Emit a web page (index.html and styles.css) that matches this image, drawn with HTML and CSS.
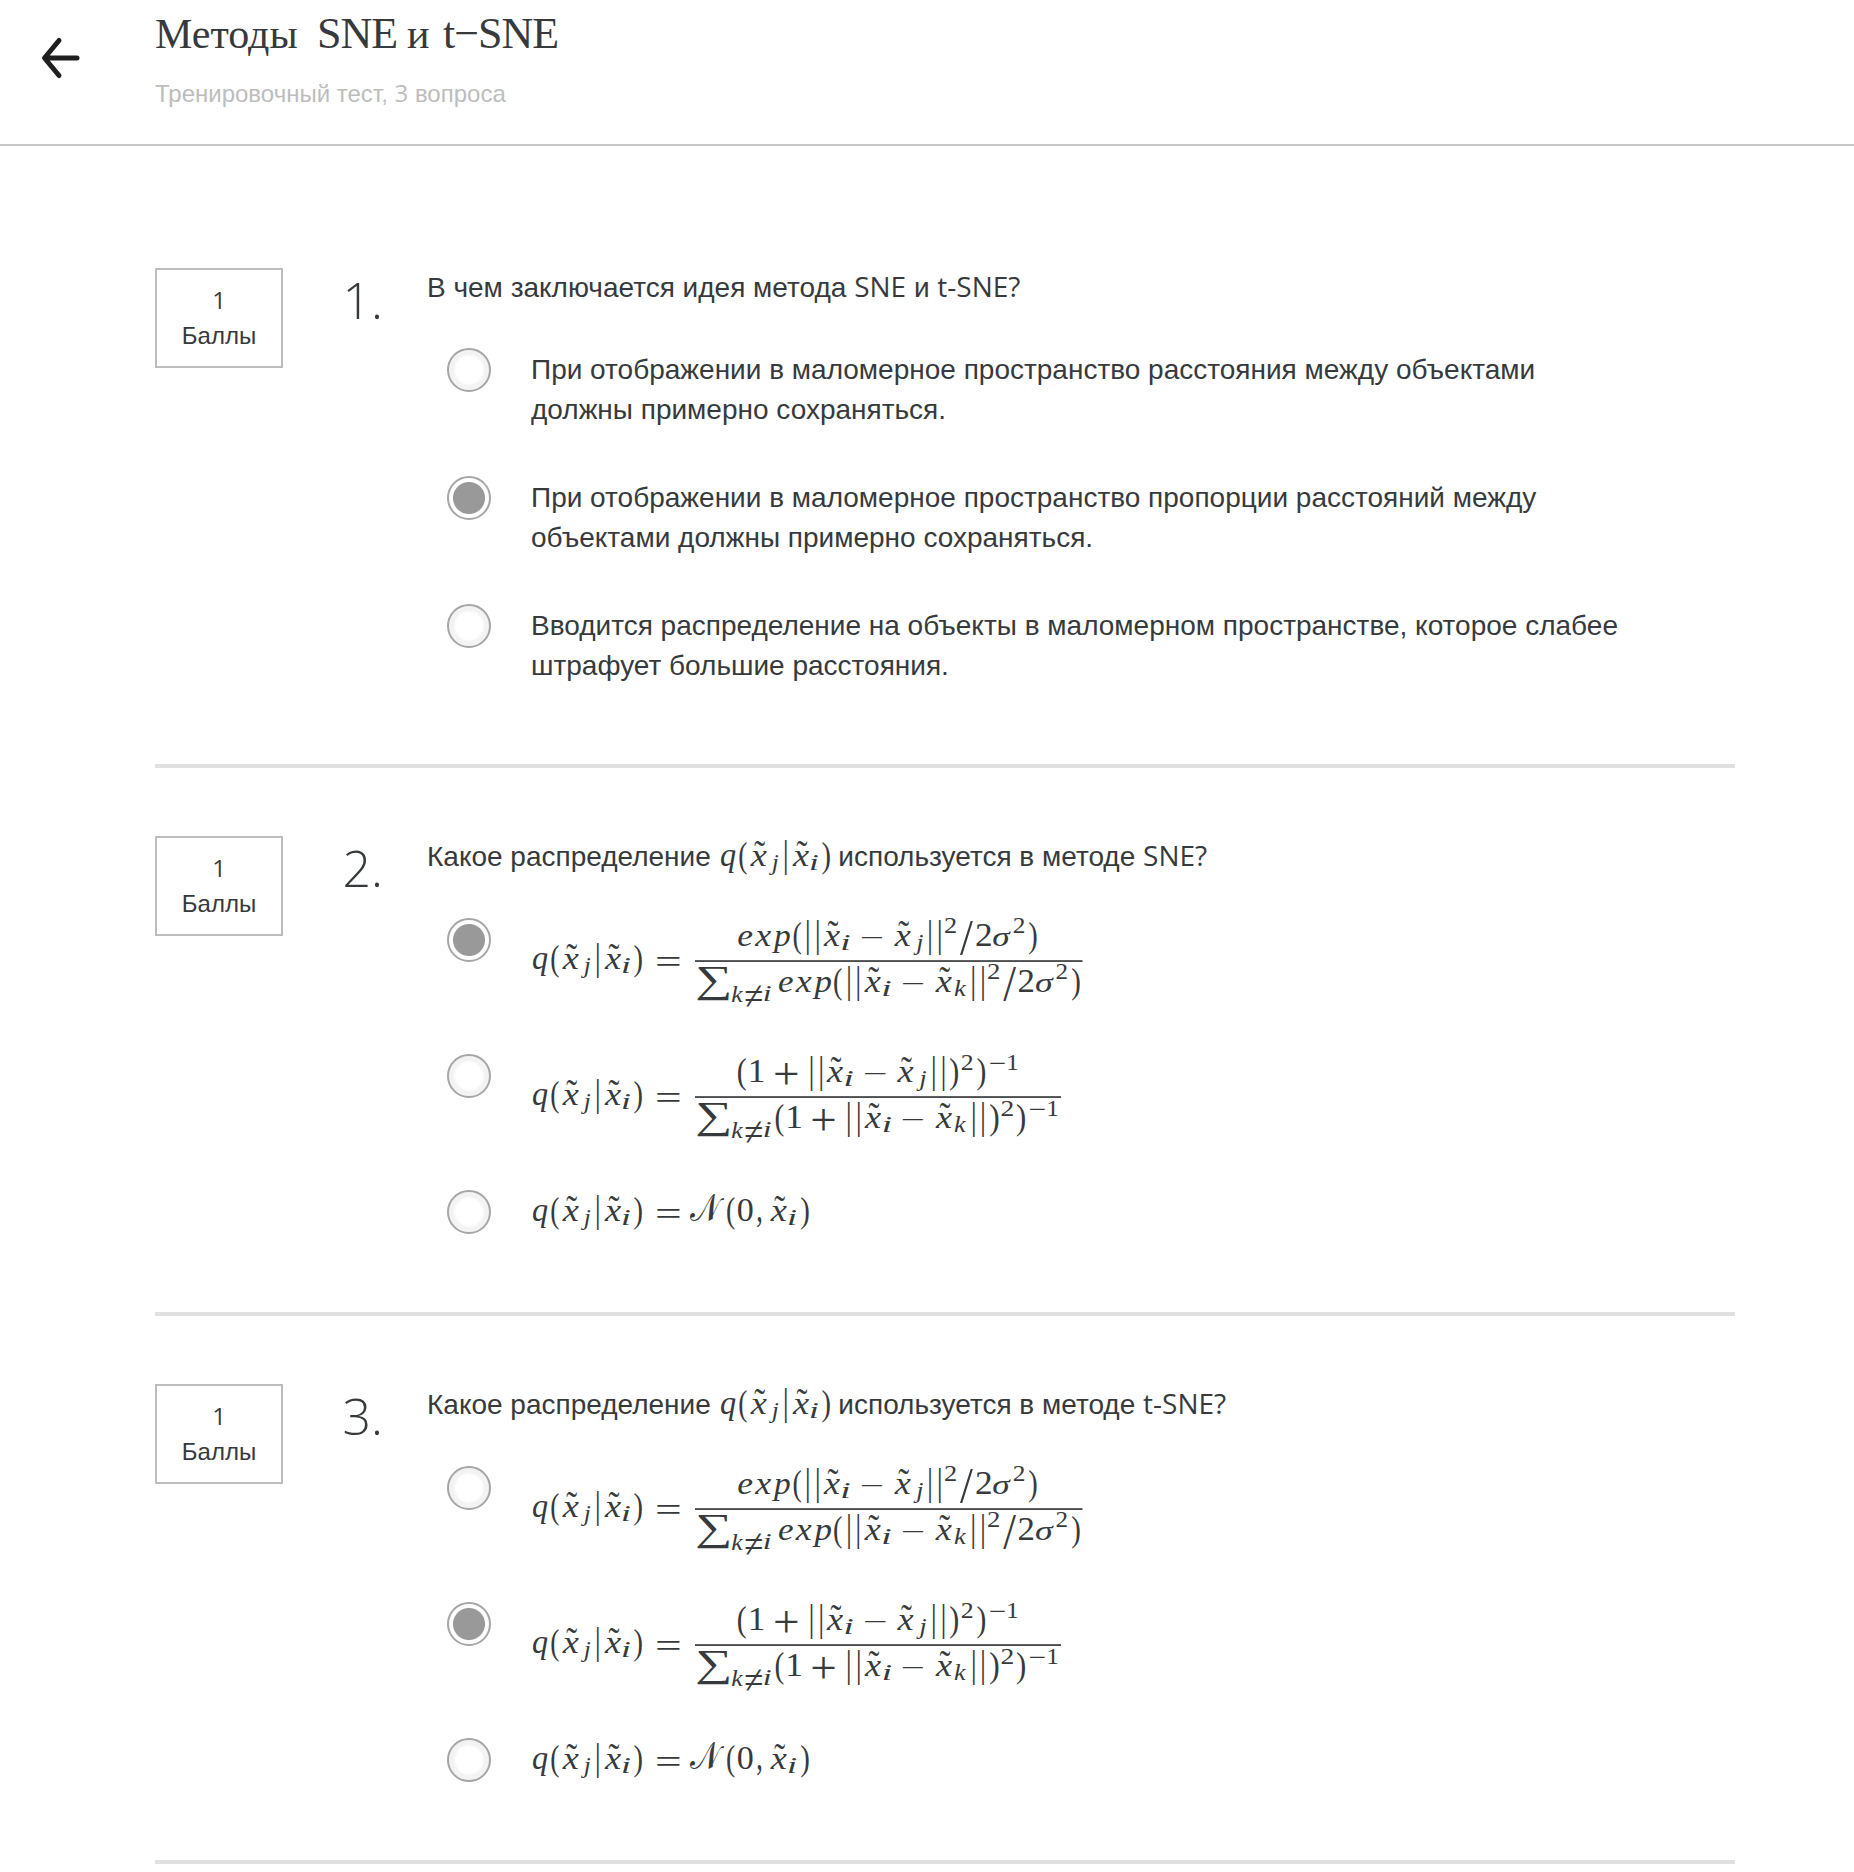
FILE: index.html
```html
<!DOCTYPE html>
<html lang="ru">
<head>
<meta charset="utf-8">
<title>Методы SNE и t-SNE</title>
<link rel="stylesheet" href="styles.css">
</head>
<body>
<header class="header">
  <svg class="back" width="40" height="44" viewBox="0 0 40 44"><path d="M18 4.500L3.500 22L18 39.500M4 22H36"/></svg>
  <div class="heading">
    <h1 class="title"><span class="title-a">Методы</span> <span class="title-b">SNE</span> <span class="title-c">и</span> <span class="title-d">t−SNE</span></h1>
    <p class="subtitle">Тренировочный тест, <span class="latin">3</span> вопроса</p>
  </div>
</header>
<main class="quiz">
  <section class="question question-text">
    <div class="points"><span class="latin">1</span><span>Баллы</span></div>
    <div class="number">1.</div>
    <div class="body">
      <p class="prompt">В чем заключается идея метода <span class="latin">SNE</span> и <span class="latin">t-SNE?</span></p>
      <ul class="options">
        <li class="option"><span class="radio"></span><p class="answer">При отображении в маломерное пространство расстояния между объектами<br>должны примерно сохраняться.</p></li>
        <li class="option"><span class="radio checked"></span><p class="answer">При отображении в маломерное пространство пропорции расстояний между<br>объектами должны примерно сохраняться.</p></li>
        <li class="option"><span class="radio"></span><p class="answer">Вводится распределение на объекты в маломерном пространстве, которое слабее<br>штрафует большие расстояния.</p></li>
      </ul>
    </div>
  </section>
  <section class="question question-math">
    <div class="points"><span class="latin">1</span><span>Баллы</span></div>
    <div class="number">2.</div>
    <div class="body">
      <p class="prompt">Какое распределение <svg class="formula inline" data-formula="q"></svg> используется в методе <span class="latin">SNE?</span></p>
      <ul class="options">
        <li class="option"><span class="radio checked"></span><svg class="formula" data-formula="gauss"></svg></li>
        <li class="option"><span class="radio"></span><svg class="formula" data-formula="student"></svg></li>
        <li class="option"><span class="radio"></span><svg class="formula" data-formula="normal"></svg></li>
      </ul>
    </div>
  </section>
  <section class="question question-math">
    <div class="points"><span class="latin">1</span><span>Баллы</span></div>
    <div class="number">3.</div>
    <div class="body">
      <p class="prompt">Какое распределение <svg class="formula inline" data-formula="q"></svg> используется в методе <span class="latin">t-SNE?</span></p>
      <ul class="options">
        <li class="option"><span class="radio"></span><svg class="formula" data-formula="gauss"></svg></li>
        <li class="option"><span class="radio checked"></span><svg class="formula" data-formula="student"></svg></li>
        <li class="option"><span class="radio"></span><svg class="formula" data-formula="normal"></svg></li>
      </ul>
    </div>
  </section>
</main>
<script src="formulas.js"></script>
</body>
</html>
```

FILE: styles.css
```css
* { box-sizing: border-box; }
body {
  margin: 0;
  background: #fff;
  color: #373a3c;
  font: 28px/40px "Liberation Sans", sans-serif;
  overflow: hidden;
}
h1, p, ul { margin: 0; padding: 0; font-weight: 400; }
ul { list-style: none; }
.latin { font-family: "Open Sans", sans-serif; line-height: 1; }

.header {
  display: flex;
  height: 146px;
  border-bottom: 2px solid #c8c8c8;
}
.back { margin: 36px 0 0 41px; flex: none; }
.back path {
  fill: none;
  stroke: #1f1f1f;
  stroke-width: 5;
  stroke-linecap: round;
  stroke-linejoin: round;
}
.heading { margin-left: 74px; }
.title {
  display: flex;
  align-items: baseline;
  height: 74px;
  padding-top: 10px;
  font: 42px/48px "Liberation Serif", serif;
  white-space: nowrap;
}
.title-a { width: 162px; }
.title-b { width: 90px; font-size: 44px; letter-spacing: -1px; }
.title-c { width: 36px; }
.title-d { font-size: 44px; letter-spacing: -1px; }
.subtitle { font-size: 24px; color: #bdbdbd; }

.quiz { padding: 122px 119px 0 155px; }
.question {
  display: flex;
  border-bottom: 4px solid #e0e0e0;
  margin-bottom: 68px;
}
.question-text { height: 500px; }
.question-math { height: 480px; }
.points {
  display: flex;
  flex-direction: column;
  align-items: center;
  width: 128px;
  height: 100px;
  padding-top: 12px;
  border: 2px solid #bdbdbd;
  font-size: 24px;
  line-height: 36px;
}
.points .latin { line-height: 36px; }
.number {
  width: 144px;
  padding: 0 44px 0 0;
  text-align: right;
  font: 300 50px/64px "Open Sans", sans-serif;
}
.body { flex: 1; }
.prompt { height: 40px; white-space: nowrap; }
.question-math .prompt { height: 42px; line-height: 42px; }
.options {
  display: flex;
  flex-direction: column;
  gap: 48px;
  padding: 40px 0 0 20px;
}
.option { display: flex; gap: 40px; height: 80px; }
.question-math .option { height: 88px; }
.answer { padding-top: 2px; white-space: nowrap; }
.radio {
  flex: none;
  width: 44px;
  height: 44px;
  border: 2px solid #a6a6a6;
  border-radius: 50%;
  background: radial-gradient(circle, #fff 13px, #f3f3f3 16px);
}
.radio.checked { background: radial-gradient(circle, #999 15.500px, #fff 16.500px); }
.formula { flex: none; overflow: visible; fill: #373a3c; }
.formula.inline { vertical-align: -9px; }
.formula text { font-family: "Liberation Serif", "DejaVu Serif", serif; }
.formula .it { font-style: italic; }
```

FILE: formulas.js
```js
// Each glyph is [text, left, right, top, bottom, italic] in pixels; it is fitted to that box.
const SVG = "http://www.w3.org/2000/svg";
const pen = document.createElement("canvas").getContext("2d");

// vertical extents around the baseline
const EXTENT = {
  x: [-15, 0], e: [-15, 0], q: [-15, 7.2], p: [-15, 7.2], "σ": [-14.6, 0.3],
  "(": [-25, 8.7], ")": [-25, 8.7], "|": [-25, 8.7], "/": [-25, 8.7],
  "0": [-22.7, 0.7], "1": [-22.7, 0], "2": [-22.7, 0],
  "=": [-11.8, -3.4], "−": [-9.7, -8], "+": [-19.4, 2.3], ",": [-3.7, 6.5],
  "𝒩": [-26.700, 1]
};
const SMALL = {
  i: [-15.500, 0], j: [-15.500, 5.2], k: [-16.500, 0],
  "1": [-15.500, 0], "2": [-15.500, 0], "−": [-7.2, -5.8], "≠": [-16, 5]
};
const ITALIC = "xeqpσijk";

function glyph(ch, l, r, base, small) {
  const [t, b] = (small ? SMALL : EXTENT)[ch];
  return [ch, l, r, base + t, base + b, ITALIC.includes(ch)];
}
const G = (ch, l, r, b) => glyph(ch, l, r, b, false);
const S = (ch, l, r, b) => glyph(ch, l, r, b, true);
const bar = (x, b) => G("|", x - 0.9, x + 0.9, b);
const X = (l, b) => [G("x", l, l + 16.7, b), ["˜", l + 4.2, l + 15, b - 23.3, b - 18.5, false]];

const q = b => [
  G("q", 2, 16.5, b), G("(", 20.3, 27.7, b), ...X(31, b), S("j", 50, 59.3, b + 4.2),
  bar(66.7, b), ...X(73.3, b), S("i", 91.7, 98.8, b + 4.2), G(")", 103.3, 110.7, b)
];
const eq = b => G("=", 126, 148.7, b);
const sum = [["∑", 166, 197.7, 48.7, 82.7, false],
  S("k", 200.7, 212, 83.7), S("≠", 214.700, 231, 83.7), S("i", 233.300, 239.700, 83.7)];

const N = 28, D = 74;
const FORMULAS = {
  q: { w: 112, h: 34, glyphs: q(25) },
  gauss: { w: 552, h: 88, line: [164, 551.5], glyphs: [
    ...q(51), eq(51),
    G("e", 207.3, 221.5, N), G("x", 223.500, 240, N), G("p", 241, 258.700, N), G("(", 262.5, 270, N),
    bar(276.8, N), bar(286.7, N), ...X(292.3, N), S("i", 311.2, 318.700, N + 3.8), G("−", 331, 351.5, N),
    ...X(363, N), S("j", 382.5, 392, N + 3.8), bar(399, N), bar(408.8, N), S("2", 414, 424.8, N - 12.5),
    G("/", 429, 442, N), G("2", 445.5, 460, N), G("σ", 462, 480, N), S("2", 482.8, 493.2, N - 12.5), G(")", 498, 505.4, N),
    ...sum,
    G("e", 248, 262, D), G("x", 264, 280.500, D), G("p", 281.500, 300, D), G("(", 303.2, 310.8, D),
    bar(318, D), bar(327.3, D), ...X(333, D), S("i", 352, 359.5, D + 3.8), G("−", 372, 392.700, D),
    ...X(404, D), S("k", 423.500, 435.2, D + 3.8), bar(442.2, D), bar(452, D), S("2", 457, 468, D - 12.5),
    G("/", 472.2, 485, D), G("2", 488, 502.3, D), G("σ", 504.7, 523, D), S("2", 525.5, 535.8, D - 12.5), G(")", 541, 548.5, D)
  ] },
  student: { w: 531, h: 88, line: [164, 530], glyphs: [
    ...q(51), eq(51),
    G("(", 207, 215, N), G("1", 219.500, 232.2, N), G("+", 244, 266.6, N), bar(280.5, N), bar(290.2, N),
    ...X(295.2, N), S("i", 314.4, 321.8, N + 3.8), G("−", 334, 355, N), ...X(365.8, N), S("j", 385.4, 395.300, N + 3.8),
    bar(402.8, N), bar(412.5, N), G(")", 419.2, 427, N), S("2", 430.7, 441.3, N - 12),
    G(")", 446.500, 454.2, N), S("−", 459, 473.800, N - 12), S("1", 477, 486.3, N - 12),
    ...sum,
    G("(", 244.700, 252.6, D), G("1", 257.2, 270, D), G("+", 281.2, 303.7, D), bar(317.800, D), bar(327.700, D),
    ...X(333.300, D), S("i", 352.5, 360, D + 3.8), G("−", 371.800, 392.5, D), ...X(404.3, D), S("k", 423.5, 435, D + 3.8),
    bar(442.800, D), bar(452, D), G(")", 459.200, 467.400, D), S("2", 470.5, 481.800, D - 12),
    G(")", 485.8, 493.8, D), S("−", 498.700, 513.700, D - 12), S("1", 517.2, 526.4, D - 12)
  ] },
  normal: { w: 280, h: 44, glyphs: [
    ...q(31), eq(31), G("𝒩", 159.3, 193.300, 31), G("(", 196.200, 203.700, 31), G("0", 206.700, 221.700, 31),
    G(",", 226, 230.2, 31), ...X(239, 31), S("i", 257.7, 265, 35.2), G(")", 270, 277.5, 31)
  ] }
};

function drawGlyph(svg, [ch, l, r, t, b, italic]) {
  pen.font = (italic ? "italic " : "") + '100px "Liberation Serif", "DejaVu Serif", serif';
  const m = pen.measureText(ch);
  const sx = (r - l) / (m.actualBoundingBoxLeft + m.actualBoundingBoxRight);
  const sy = (b - t) / (m.actualBoundingBoxAscent + m.actualBoundingBoxDescent);
  const node = document.createElementNS(SVG, "text");
  node.textContent = ch;
  node.setAttribute("font-size", "100");
  if (italic) node.setAttribute("class", "it");
  const x = l + m.actualBoundingBoxLeft * sx;
  const y = t + m.actualBoundingBoxAscent * sy;
  node.setAttribute("transform", `translate(${x} ${y}) scale(${sx} ${sy})`);
  svg.append(node);
}

for (const svg of document.querySelectorAll("[data-formula]")) {
  const f = FORMULAS[svg.dataset.formula];
  svg.setAttribute("width", f.w);
  svg.setAttribute("height", f.h);
  f.glyphs.forEach(g => drawGlyph(svg, g));
  if (f.line) {
    const rule = document.createElementNS(SVG, "rect");
    rule.setAttribute("x", f.line[0]);
    rule.setAttribute("y", 42.2);
    rule.setAttribute("width", f.line[1] - f.line[0]);
    rule.setAttribute("height", 1.7);
    svg.append(rule);
  }
}
```
